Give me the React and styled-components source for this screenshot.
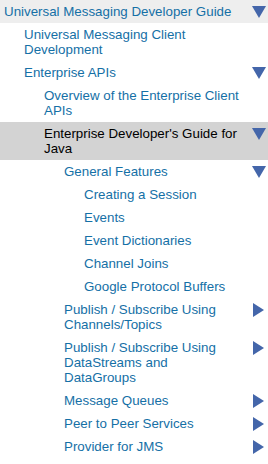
import React from 'react';
import styled, { createGlobalStyle } from 'styled-components';

const GlobalStyle = createGlobalStyle`
    body {
        margin: 0;
        background: #ffffff;
        font-family: "Liberation Sans", Arial, sans-serif;
    }
`
const Nav = styled.nav`
    width: 268px;
    display: flex;
    flex-direction: column;
`
const Row = styled.div`
    display: flex;
    justify-content: space-between;
    align-items: flex-start;
    padding: 4px 0 4px ${props => 4 + props.$level * 20}px;
    background: ${props => props.$active ? '#d3d3d3' : props.$root ? '#eeeeee' : 'transparent'};
`
const Label = styled.a`
    flex: 1;
    font-size: 13.33px;
    line-height: 15px;
    color: ${props => props.$active ? '#000000' : '#1570a6'};
    text-decoration: none;
    padding-right: 13px;
`
const Toggle = styled.svg`
    flex-shrink: 0;
    width: 14px;
    height: 14px;
    margin: 1px 2px 0 0;
    fill: #4466aa;
`

function Arrow({ open }) {
    return (
        <Toggle viewBox="0 0 14 14">
            {open
                ? <polygon points="0,1 14,1 7,13" />
                : <polygon points="1,0 12,7 1,14" />}
        </Toggle>
    )
}

const items = [
    { level: 0, text: 'Universal Messaging Developer Guide', arrow: 'open', root: true },
    { level: 1, text: 'Universal Messaging Client Development' },
    { level: 1, text: 'Enterprise APIs', arrow: 'open' },
    { level: 2, text: 'Overview of the Enterprise Client APIs' },
    { level: 2, text: "Enterprise Developer's Guide for Java", arrow: 'open', active: true },
    { level: 3, text: 'General Features', arrow: 'open' },
    { level: 4, text: 'Creating a Session' },
    { level: 4, text: 'Events' },
    { level: 4, text: 'Event Dictionaries' },
    { level: 4, text: 'Channel Joins' },
    { level: 4, text: 'Google Protocol Buffers' },
    { level: 3, text: 'Publish / Subscribe Using Channels/Topics', arrow: 'closed' },
    { level: 3, text: 'Publish / Subscribe Using DataStreams and DataGroups', arrow: 'closed' },
    { level: 3, text: 'Message Queues', arrow: 'closed' },
    { level: 3, text: 'Peer to Peer Services', arrow: 'closed' },
    { level: 3, text: 'Provider for JMS', arrow: 'closed' },
]

export default function App() {
    return (
        <>
            <GlobalStyle />
            <Nav>
                {items.map((item, i) => (
                    <Row key={i} $level={item.level} $active={item.active} $root={item.root}>
                        <Label href="#" $active={item.active}>{item.text}</Label>
                        {item.arrow && <Arrow open={item.arrow === 'open'} />}
                    </Row>
                ))}
            </Nav>
        </>
    )
}
